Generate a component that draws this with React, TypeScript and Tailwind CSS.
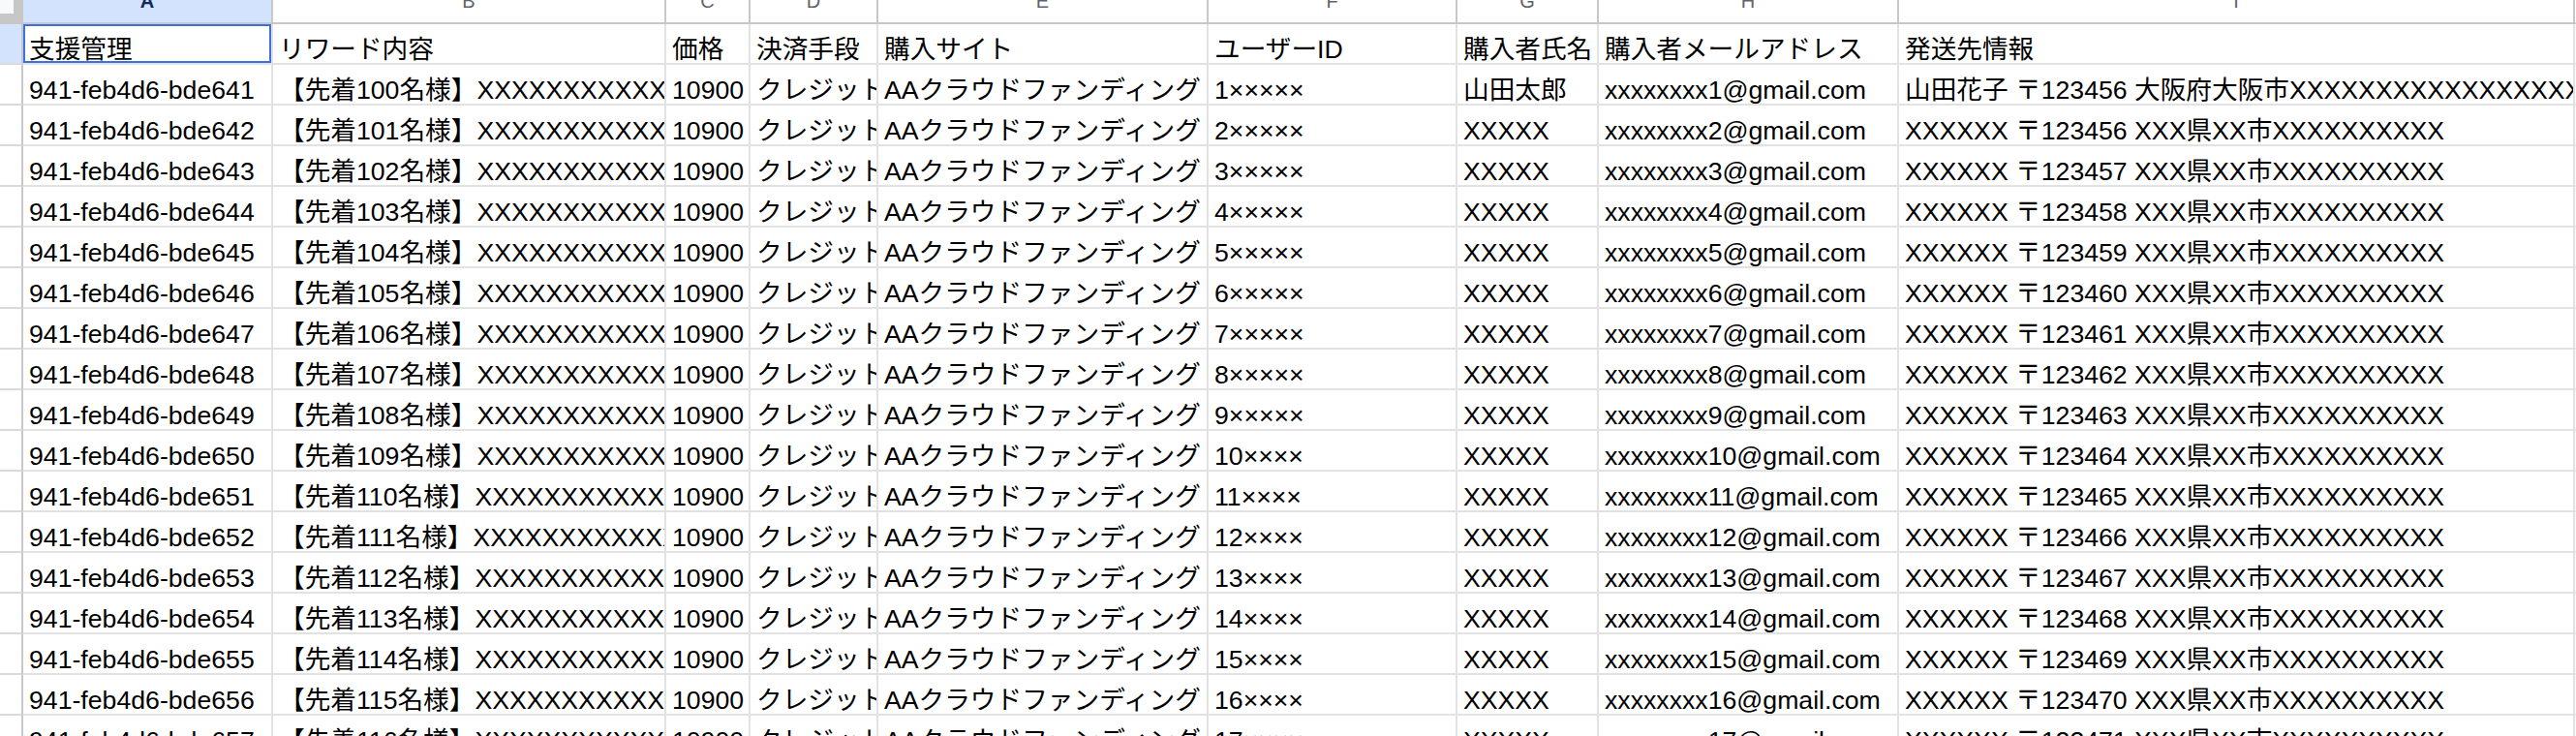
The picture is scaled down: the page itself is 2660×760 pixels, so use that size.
import React from 'react';

// Spreadsheet view: support/order list exported from a crowdfunding site

const COLS = ['A', 'B', 'C', 'D', 'E', 'F', 'G', 'H', 'I'];

const HEADERS = [
  '支援管理',
  'リワード内容',
  '価格',
  '決済手段',
  '購入サイト',
  'ユーザーID',
  '購入者氏名',
  '購入者メールアドレス',
  '発送先情報',
];

const buildRow = (n: number): string[] => {
  const num = String(n);
  return [
    `941-feb4d6-bde${640 + n}`,
    `【先着${99 + n}名様】XXXXXXXXXXXXXXXXXXXX`,
    '10900',
    'クレジット',
    'AAクラウドファンディング',
    num + '×'.repeat(6 - num.length),
    n === 1 ? '山田太郎' : 'XXXXX',
    `xxxxxxxx${n}@gmail.com`,
    n === 1
      ? '山田花子 〒123456 大阪府大阪市XXXXXXXXXXXXXXXXXXXXXXXXXX'
      : `XXXXXX 〒${123454 + n} XXX県XX市XXXXXXXXXX`,
  ];
};

const ROWS: string[][] = [HEADERS, ...Array.from({ length: 17 }, (_, i) => buildRow(i + 1))];

const App: React.FC = () => {
  return (
    <div className="w-[2660px] h-[760px] overflow-hidden bg-white font-['Liberation_Sans','Noto_Sans_CJK_JP',sans-serif]">
      <div className="grid grid-cols-[24px_258px_406px_87px_132px_341px_257px_146px_310px_698px_1fr]">
        {/* column header band */}
        <div className="h-[25px] bg-[#c7c7c7] border-b-2 border-[#c7c7c7]">
          <div className="w-[14px] h-[14px] bg-[#f8f9fa]" />
        </div>
        {COLS.map((c) => (
          <div
            key={c}
            className={`h-[25px] overflow-hidden flex justify-center border-r-2 border-b-2 border-[#c7c7c7] text-[20px] leading-[20px] ${
              c === 'A' ? 'bg-[#d3e3fd] text-[#0b2a5c] font-bold' : 'bg-white text-[#5f6368]'
            }`}
          >
            <span className="-mt-[9px]">{c}</span>
          </div>
        ))}
        <div className="h-[25px] bg-white border-b-2 border-[#c7c7c7]" />

        {/* data rows */}
        {ROWS.map((row, r) => (
          <React.Fragment key={r}>
            <div
              className={`h-[42px] border-r-2 border-r-[#c7c7c7] border-b-2 border-b-[#dadada] ${
                r === 0 ? 'bg-[#d3e3fd]' : 'bg-white'
              }`}
            />
            {row.map((val, c) => (
              <div
                key={c}
                className={`h-[42px] overflow-hidden whitespace-nowrap flex items-end pl-[6px] border-r-2 border-b-2 border-[#e2e2e2] text-[26.67px] leading-[28px] text-black ${
                  r === 0 && c === 0 ? 'shadow-[inset_0_0_0_2px_#3d72dd]' : ''
                }`}
              >
                {val}
              </div>
            ))}
            <div className="h-[42px] border-b-2 border-[#e2e2e2]" />
          </React.Fragment>
        ))}
      </div>
    </div>
  );
};

export default App;
